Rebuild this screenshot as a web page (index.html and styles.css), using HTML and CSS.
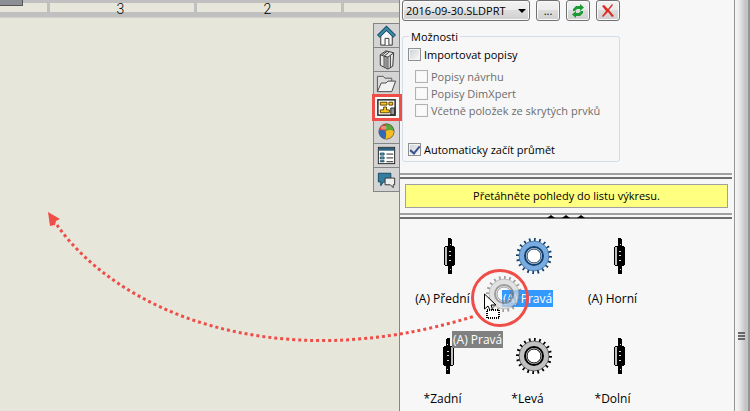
FILE: index.html
```html
<!DOCTYPE html>
<html lang="cs">
<head>
    <meta charset="UTF-8">
    <meta name="viewport" content="width=device-width, initial-scale=1.0">
    <title>Paleta pohledů</title>
    <link rel="stylesheet" href="styles.css">
</head>
<body>

<!-- Shared view thumbnails -->
<svg class="symbols" aria-hidden="true">
    <symbol id="gear" viewBox="0 0 38 38">
        <circle class="gear-teeth" cx="19" cy="19" r="16" pathLength="60" />
        <circle class="gear-body" cx="19" cy="19" r="12" />
        <circle class="gear-edge" cx="19" cy="19" r="15" />
        <circle class="gear-ring" cx="19" cy="19" r="9" />
        <circle class="gear-hole" cx="19" cy="19" r="7" />
    </symbol>
    <symbol id="shaft" viewBox="0 0 38 38">
        <path d="M18 1h3v1h1v35h-4z" fill="#000" />
        <path d="M15 9h9v1h1v18h-1v1h-9v-1h-1V10h1z" fill="#000" />
        <path d="M15 10h2v18h-2z" fill="#c0c0c0" />
        <path d="M19 14h2M19 18h2M19 23h2M20 7h1M20 32h1" stroke="#ddd" transform="translate(0 .5)" />
    </symbol>
</svg>

<div class="app">
    <main class="sheet">
        <div class="ruler">
            <span class="ruler-cell ruler-first"></span>
            <span class="ruler-cell">3</span>
            <span class="ruler-cell">2</span>
            <span class="ruler-cell ruler-last"></span>
        </div>
        <div class="corner"></div>

        <nav class="tabs">
            <button class="tab" aria-label="Zdroje">
                <svg viewBox="0 0 26 24">
                    <path d="M7 12v10h12V12l-6-6z" fill="#f7f7f7" stroke="#333" />
                    <path d="M11.500 22v-7h4v7" fill="#fff" stroke="#333" />
                    <path d="M4.500 13L13 4.500l8.500 8.500" fill="none" stroke="#174a63" stroke-width="4" />
                    <path d="M5 12.500L13 4.500l8 8" fill="none" stroke="#3d8db0" stroke-width="2" />
                </svg>
            </button>
            <button class="tab" aria-label="Knihovna návrhů">
                <svg viewBox="0 0 26 24">
                    <path d="M6.500 7l6-4 8 2-1 14-5 3-8-4z" fill="#e8e8e8" stroke="#333" />
                    <path d="M6.500 7l4 1.500v11M10.500 8.500l5-4M10.500 8.500l4 1v12M14.500 9.500l5.500-4M8.500 7.500l5-4M12.500 9.500v11M17 8v12" fill="none" stroke="#333" />
                </svg>
            </button>
            <button class="tab" aria-label="Průzkumník souborů">
                <svg viewBox="0 0 26 24">
                    <path d="M3.500 20.500v-16h6l2 2h7v4" fill="#ddd" stroke="#555" />
                    <path d="M3.500 20.500l4-9h5l2-2h8l-4 11z" fill="#f2f2f2" stroke="#444" />
                </svg>
            </button>
            <button class="tab tab-active" aria-label="Paleta pohledů">
                <svg viewBox="0 0 26 24">
                    <rect x="4" y="4" width="18" height="16" fill="#fff" stroke="#222" stroke-width="1.500" />
                    <path d="M6.500 6.500h7v3h-7zM15.500 6.500h4v3h-4zM10 11.500h3v3h3v3H6.500v-3H10z" fill="#ffc61a" stroke="#5c4300" />
                    <path d="M17.500 12.500h4v7h-4z" fill="#999" stroke="#222" />
                </svg>
            </button>
            <button class="tab" aria-label="Vzhledy">
                <svg viewBox="0 0 26 24">
                    <circle cx="13" cy="12" r="8" fill="#e3402c" />
                    <path d="M12 4a8 8 0 0 1 9 8c-3-2-6-2-9 0z" fill="#56a83a" />
                    <path d="M21 12a8 8 0 0 1-10 7.700c2-2 2-5 1-7.700 3-2 6-2 9 0z" fill="#f5bf23" />
                    <path d="M5 12c2-2 5-2 7 0 1 3 1 6-1 7.700A8 8 0 0 1 5 12z" fill="#2e6bbd" />
                    <ellipse cx="10" cy="8" rx="3" ry="2" fill="#fff" opacity=".4" />
                    <circle cx="13" cy="12" r="8" fill="none" stroke="#444" opacity=".6" />
                </svg>
            </button>
            <button class="tab" aria-label="Vlastnosti">
                <svg viewBox="0 0 26 24">
                    <rect x="4.500" y="3.500" width="17" height="17" fill="#fff" stroke="#222" />
                    <path d="M5 4h16v3H5z" fill="#2a6382" />
                    <path d="M6.500 9.500h4v2h-4zM6.500 13.500h4v2h-4zM6.500 17.500h4v1h-4z" fill="#74b5d2" stroke="#174a63" />
                    <path d="M13 10.500h7M13 14.500h7M13 18.500h7" stroke="#222" />
                </svg>
            </button>
            <button class="tab" aria-label="Fórum">
                <svg viewBox="0 0 26 24">
                    <path d="M4.500 5.500h13v9H10l-3 4v-4H4.500z" fill="#357d9f" stroke="#174a63" />
                    <path d="M11.500 10.500h10v7H20v3l-3-3h-5.500z" fill="#eee" stroke="#333" />
                </svg>
            </button>
        </nav>
    </main>

    <aside class="panel">
        <div class="options">
            <div class="file-row">
                <span class="file-select">
                    <select aria-label="Soubor">
                        <option>2016-09-30.SLDPRT</option>
                    </select>
                </span>
                <button class="tool" aria-label="Procházet">...</button>
                <button class="tool" aria-label="Obnovit">
                    <svg viewBox="0 0 14 14">
                        <path d="M2 7V5l3-3h4V0l4 3.500L9 7V5H6L4 7z" fill="#1a9c33" />
                        <path d="M12 7v2l-3 3H5v2l-4-3.500L5 7v2h3l2-2z" fill="#1a9c33" />
                    </svg>
                </button>
                <button class="tool" aria-label="Vymazat">
                    <svg viewBox="0 0 14 14">
                        <path d="M1 2l2-1 4 4 4-5 1 1-4 5 5 6-2 1-4-5-5 5-1-1 4-5z" fill="#dc2c24" />
                    </svg>
                </button>
            </div>

            <fieldset>
                <legend>Možnosti</legend>
                <label class="check"><input type="checkbox"> Importovat popisy</label>
                <div class="sub-options">
                    <label class="check"><input type="checkbox" disabled> Popisy návrhu</label>
                    <label class="check"><input type="checkbox" disabled> Popisy DimXpert</label>
                    <label class="check"><input type="checkbox" disabled> Včetně položek ze skrytých prvků</label>
                </div>
                <label class="check"><input type="checkbox" checked> Automaticky začít průmět</label>
            </fieldset>
        </div>

        <div class="splitter"></div>
        <p class="message">Přetáhněte pohledy do listu výkresu.</p>
        <div class="splitter splitter-arrows">
            <span class="arrow"></span>
            <span class="arrow"></span>
            <span class="arrow"></span>
        </div>

        <div class="views">
            <button class="view"><svg class="thumb"><use href="#shaft" /></svg><span class="view-name">(A) Přední</span></button>
            <button class="view view-selected"><svg class="thumb"><use href="#gear" /></svg><span class="view-name">(A) Pravá</span></button>
            <button class="view"><svg class="thumb"><use href="#shaft" /></svg><span class="view-name">(A) Horní</span></button>
            <button class="view"><svg class="thumb thumb-back"><use href="#shaft" /></svg><span class="view-name">*Zadní</span></button>
            <button class="view"><svg class="thumb"><use href="#gear" /></svg><span class="view-name">*Levá</span></button>
            <button class="view"><svg class="thumb"><use href="#shaft" /></svg><span class="view-name">*Dolní</span></button>
        </div>
    </aside>

    <div class="sash">
        <svg class="grip" viewBox="0 0 7 9">
            <path d="M0 1h7M0 4h7M0 7h7" stroke="#666" stroke-width="2" />
        </svg>
    </div>

    <!-- Dragged view and the path it follows -->
    <div class="drag">
        <svg class="drag-path" viewBox="0 0 750 411">
            <g class="ghost"><use href="#gear" x="485" y="275" width="38" height="38" /></g>
            <path d="M484.500 294v15l3.500-3 3 6 2-1-2-6h5z" fill="#fff" stroke="#000" />
            <rect x="487" y="310" width="12" height="8" fill="#fff" stroke="#000" stroke-width="2" stroke-dasharray="1 1" shape-rendering="crispEdges" />
            <path d="M57 225C115 308 270 380 475 316" fill="none" stroke="#ee4d48" stroke-width="3" stroke-dasharray="3 3" />
            <path d="M48 212l12 7-4 2-1 4-5 1z" fill="#ee4d48" />
            <circle cx="500" cy="298" r="27.500" fill="none" stroke="#ee4d48" stroke-width="3" />
        </svg>
        <span class="drag-label">(A) Pravá</span>
    </div>
</div>

</body>
</html>
```
FILE: styles.css
```css
* {
    box-sizing: border-box;
}
body {
    margin: 0;
    font-family: "Open Sans", "Noto Sans", sans-serif;
    font-size: 11px;
    line-height: 17px;
    color: #000;
}
button, select {
    font: inherit;
    color: inherit;
}
.symbols {
    display: none;
}
.app {
    position: relative;
    display: grid;
    grid-template-columns: minmax(0, 1fr) 335px 16px;
    min-height: 100vh;
    overflow: hidden;
}

/* Drawing sheet */
.sheet {
    position: relative;
    background: #e6e6da;
}
.ruler {
    display: flex;
    gap: 3px;
    height: 18px;
    padding: 3px 0 5px;
    background: #c0c0c0;
    border-bottom: 1px solid #d0d0c8;
    overflow: hidden;
}
.ruler-cell {
    flex: none;
    width: 144px;
    padding-right: 3px;
    background: #e6e6da;
    font-family: Roboto, sans-serif;
    font-size: 14px;
    font-weight: 300;
    line-height: 12px;
    text-align: center;
}
.ruler-first {
    width: 47px;
}
.ruler-last {
    flex: 1;
}
.corner {
    position: absolute;
    left: 0;
    top: 0;
    width: 23px;
    height: 6px;
    background: #8c9094;
    border: solid #5a5558;
    border-width: 0 1px 1px 0;
}

/* Task pane tabs */
.tabs {
    position: absolute;
    top: 23px;
    right: 0;
    display: flex;
    flex-direction: column;
    width: 26px;
    border: solid #858585;
    border-width: 0 0 1px 1px;
}
.tab {
    height: 24px;
    padding: 0;
    border: 0;
    border-top: 1px solid #858585;
    background: #d4d4d4;
}
.tab svg {
    display: block;
    width: 25px;
    height: 23px;
}
.tab-active {
    position: relative;
    background: #f7f7f7;
}
.tab-active::after {
    content: "";
    position: absolute;
    z-index: 1;
    inset: -2px -3px -2px -2px;
    border: 3px solid #ee4d48;
}

/* View palette */
.panel {
    background: #f7f7f7;
    border-left: 1px solid #858585;
}
.options {
    height: 173px;
    padding: 0 2px;
}
.file-row {
    display: flex;
    gap: 6px;
    max-width: 218px;
}
.file-select {
    position: relative;
    flex: 1;
}
.file-select::after {
    content: "";
    position: absolute;
    top: 9px;
    right: 4px;
    border: 4px solid transparent;
    border-top-color: #000;
    border-bottom: 0;
}
.file-select select {
    width: 100%;
    appearance: none;
    padding: 0 3px;
}
.file-select select, .tool {
    height: 21px;
    border: 1px solid #707070;
    border-radius: 3px;
    background: linear-gradient(#f2f2f2, #ebebeb 50%, #dddddd 50%, #cfcfcf);
    box-shadow: inset 0 0 0 1px #fafafa;
}
.tool {
    display: flex;
    align-items: center;
    justify-content: center;
    width: 24px;
    padding: 0;
}
.tool svg {
    flex: none;
    width: 14px;
    height: 14px;
}
fieldset {
    max-width: 218px;
    margin: 7px 0 0;
    padding: 1px 5px 3px;
    border: 1px solid #d3dde6;
    border-radius: 3px;
}
legend {
    margin-left: 1px;
    padding: 0 2px;
}
.check {
    display: flex;
    align-items: center;
    gap: 3px;
    white-space: nowrap;
}
.check input {
    appearance: none;
    width: 13px;
    height: 13px;
    margin: 0;
    border: 1px solid #8e8f8f;
    background: linear-gradient(135deg, #ccd0d5, #fafafa);
    box-shadow: inset 0 0 0 1px #f4f4f4;
}
.check input:checked {
    display: grid;
    place-items: start center;
}
.check input:checked::after {
    content: "";
    width: 4px;
    height: 8px;
    border: solid #3c5190;
    border-width: 0 2px 2px 0;
    transform: rotate(40deg);
}
.sub-options {
    padding: 5px 7px 22px;
    color: #6d6d6d;
}
.sub-options input {
    border-color: #b1b1b1;
    background: #fafafa;
}
.splitter {
    height: 6px;
    margin-right: 2px;
    border: solid #6f6f6f;
    border-width: 2px 0;
    border-top-color: #a0a0a0;
}
.splitter-arrows {
    display: flex;
    justify-content: center;
    gap: 7px;
}
.arrow {
    height: 3px;
    border: 4px solid transparent;
    border-top: 0;
    border-bottom: 3px solid #000;
}
.message {
    margin: 5px 6px 5px 5px;
    padding: 2px;
    border: 1px solid #a0a0a0;
    background: #ffff80;
    line-height: 18px;
    text-align: center;
}
.views {
    display: grid;
    grid-template-columns: repeat(auto-fill, 85px);
    padding-top: 18px;
    row-gap: 30px;
    font-size: 12px;
}
.view {
    display: flex;
    flex-direction: column;
    align-items: center;
    gap: 15px;
    padding: 0;
    border: 0;
    background: none;
}
.thumb {
    width: 38px;
    height: 38px;
    margin-left: 13px;
}
.thumb-back {
    transform: scaleX(-1);
}
.view-name {
    padding: 0 1px;
}
.view-selected .view-name {
    background: #3399ff;
    color: #fff;
}

/* Gear thumbnail */
.gear-teeth {
    fill: none;
    stroke: var(--gear-line, #000);
    stroke-width: 4;
    stroke-dasharray: 1 2;
}
.gear-body {
    fill: none;
    stroke: var(--gear-fill, #c0c0c0);
    stroke-width: 6;
}
.gear-edge {
    fill: none;
    stroke: var(--gear-line, #000);
    stroke-width: 0.5;
}
.gear-ring {
    fill: none;
    stroke: var(--gear-line, #000);
    stroke-width: 2;
}
.gear-hole {
    fill: var(--gear-center, #fff);
    stroke: var(--gear-line, #000);
}
.view-selected .thumb {
    --gear-fill: #78ace0;
    --gear-line: #123f6e;
}
.ghost {
    --gear-fill: #d8d8d8;
    --gear-line: #777;
    --gear-center: none;
    opacity: 0.7;
}

/* Pane edge */
.sash {
    display: flex;
    align-items: center;
    padding: 262px 0 0 3px;
    background: linear-gradient(90deg, #f7f7f7, #e8e8e8 35%, #c4c4c8 80%, #c4c4c8);
    border: solid #949494;
    border-width: 0 2px 0 1px;
}
.grip {
    width: 7px;
    height: 9px;
}

/* Drag overlay */
.drag {
    position: absolute;
    top: 0;
    right: 0;
    width: 750px;
    height: 411px;
    pointer-events: none;
}
.drag-path {
    display: block;
}
.drag-label {
    position: absolute;
    left: 452px;
    top: 331px;
    padding: 0 1px;
    background: #808080;
    color: #fff;
    font-size: 12px;
}
```
